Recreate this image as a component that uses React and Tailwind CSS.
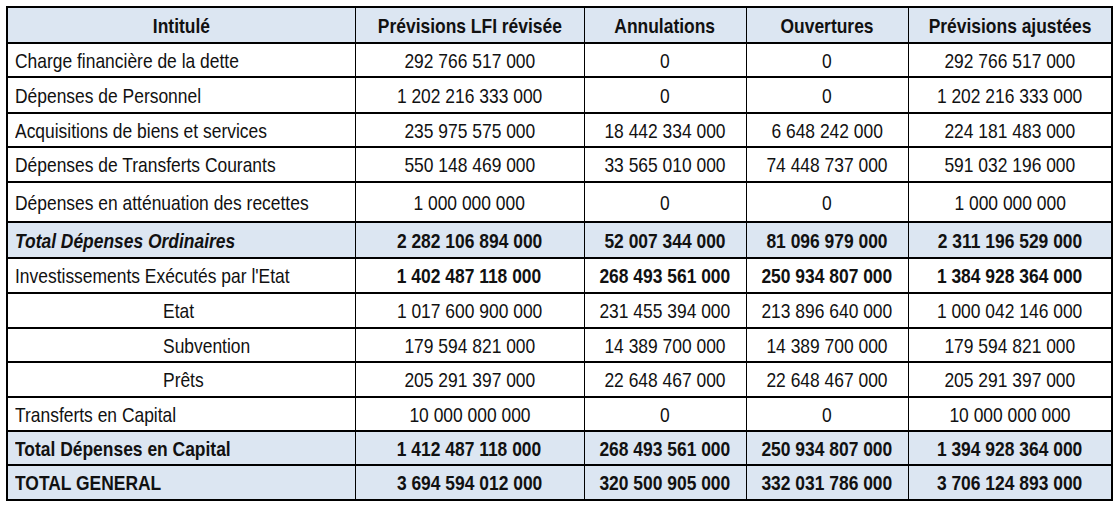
export default function App() {
  const rows = [
    { label: "Charge financière de la dette", v: ["292 766 517 000", "0", "0", "292 766 517 000"], h: 34 },
    { label: "Dépenses de Personnel", v: ["1 202 216 333 000", "0", "0", "1 202 216 333 000"], h: 36 },
    { label: "Acquisitions de biens et services", v: ["235 975 575 000", "18 442 334 000", "6 648 242 000", "224 181 483 000"], h: 34 },
    { label: "Dépenses de Transferts Courants", v: ["550 148 469 000", "33 565 010 000", "74 448 737 000", "591 032 196 000"], h: 35 },
    { label: "Dépenses en atténuation des recettes", v: ["1 000 000 000", "0", "0", "1 000 000 000"], h: 40 },
    { label: "Total Dépenses Ordinaires", v: ["2 282 106 894 000", "52 007 344 000", "81 096 979 000", "2 311 196 529 000"], h: 36, total: true, italic: true },
    { label: "Investissements Exécutés par l'Etat", v: ["1 402 487 118 000", "268 493 561 000", "250 934 807 000", "1 384 928 364 000"], h: 35, boldVals: true },
    { label: "Etat", v: ["1 017 600 900 000", "231 455 394 000", "213 896 640 000", "1 000 042 146 000"], h: 35, indent: true },
    { label: "Subvention", v: ["179 594 821 000", "14 389 700 000", "14 389 700 000", "179 594 821 000"], h: 34, indent: true },
    { label: "Prêts", v: ["205 291 397 000", "22 648 467 000", "22 648 467 000", "205 291 397 000"], h: 35, indent: true },
    { label: "Transferts en Capital", v: ["10 000 000 000", "0", "0", "10 000 000 000"], h: 34 },
    { label: "Total Dépenses en Capital", v: ["1 412 487 118 000", "268 493 561 000", "250 934 807 000", "1 394 928 364 000"], h: 34, total: true },
    { label: "TOTAL GENERAL", v: ["3 694 594 012 000", "320 500 905 000", "332 031 786 000", "3 706 124 893 000"], h: 35, total: true },
  ];
  const cellB = "border-x border-y-2 border-black whitespace-nowrap";
  const C = ({ children }) => (
    <span className="inline-block scale-x-[0.83] origin-center">{children}</span>
  );
  const L = ({ children }) => (
    <span className="inline-block scale-x-[0.83] origin-left">{children}</span>
  );
  return (
    <div className="w-[1116px] h-[505px] bg-white pt-[6px] pl-[6px]" style={{ fontFamily: '"Liberation Sans", Arial, sans-serif' }}>
      <table className="border-collapse border-2 border-black text-[21px] leading-none text-[#111] table-fixed w-[1105px]">
        <colgroup>
          <col className="w-[348px]" />
          <col className="w-[229px]" />
          <col className="w-[162px]" />
          <col className="w-[162px]" />
          <col className="w-[204px]" />
        </colgroup>
        <thead>
          <tr className="h-[36px] bg-[#dce6f2]">
            {["Intitulé", "Prévisions LFI révisée", "Annulations", "Ouvertures", "Prévisions ajustées"].map((t) => (
              <th key={t} className={`${cellB} font-bold text-center p-0`}><C>{t}</C></th>
            ))}
          </tr>
        </thead>
        <tbody>
          {rows.map((r) => (
            <tr key={r.label} className={r.total ? "bg-[#dce6f2]" : "bg-white"} style={{ height: r.h }}>
              <td className={`${cellB} p-0 text-left ${r.indent ? "pl-[155px]" : "pl-[7px]"} ${r.total ? "font-bold" : ""} ${r.italic ? "italic" : ""}`}>
                <L>{r.label}</L>
              </td>
              {r.v.map((x, i) => (
                <td key={i} className={`${cellB} p-0 text-center ${r.total || r.boldVals ? "font-bold" : ""}`}><C>{x}</C></td>
              ))}
            </tr>
          ))}
        </tbody>
      </table>
    </div>
  );
}
